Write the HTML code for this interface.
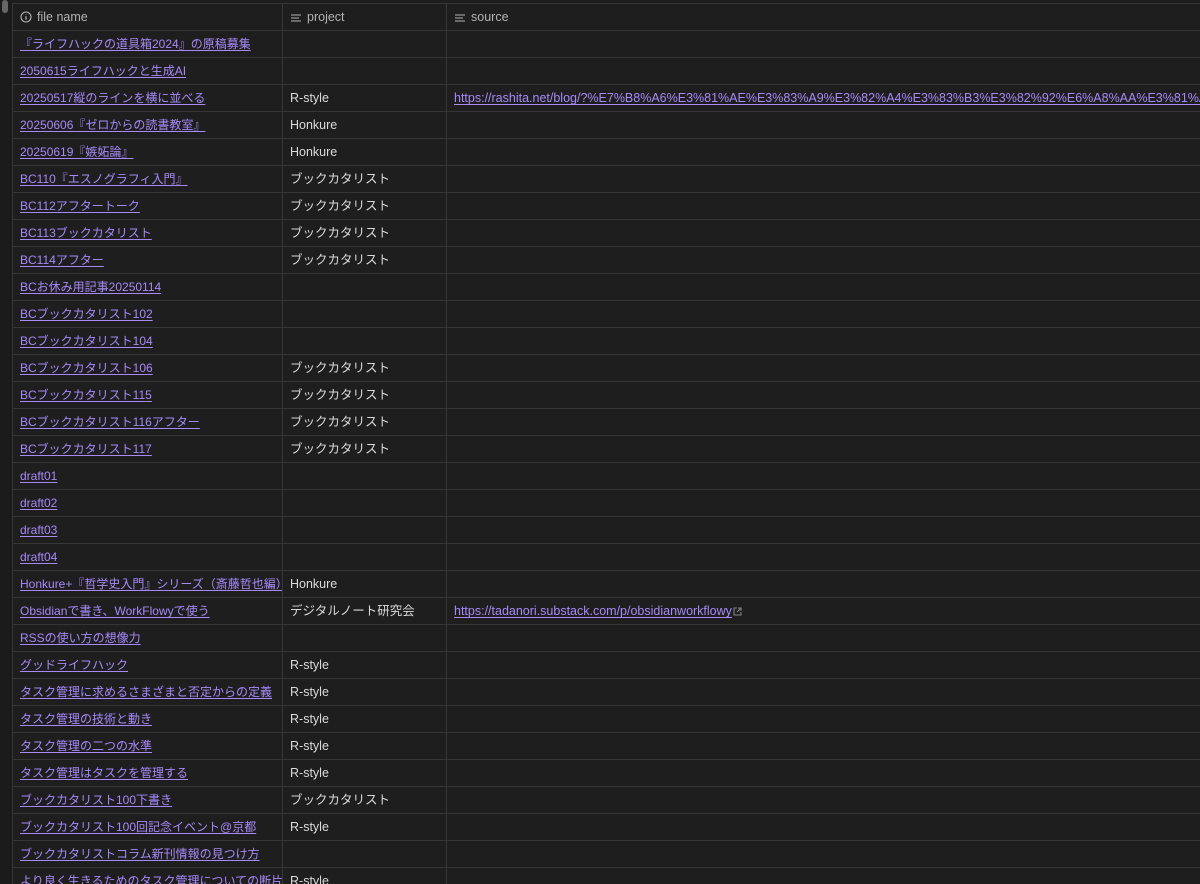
<!DOCTYPE html>
<html><head><meta charset="utf-8"><style>
html,body{margin:0;background:#1e1e1e;width:1200px;height:884px;overflow:hidden}
body{font-family:"Liberation Sans","Noto Sans CJK JP",sans-serif;font-size:12.5px;color:#dadada;position:relative}
.strip{position:absolute;left:0;top:0;width:12px;height:884px;background:#1b1b1b}
.thumb{position:absolute;left:2px;top:0;width:6px;height:13px;background:#666;border-radius:3px}
.wrap{position:absolute;left:12px;top:3px;width:1188px;height:881px;overflow:hidden}
table{border-collapse:collapse;table-layout:fixed;width:1300px}
td,th{border:1px solid #363636;height:26px;padding:0 0 0 7px;white-space:nowrap;overflow:hidden;text-align:left;font-weight:normal;line-height:16px;vertical-align:middle}
th{color:#b3b3b3}
td span,td a{display:inline-block;line-height:16px;vertical-align:middle}
td:first-child a{font-size:12px}
a{color:#a68af9;text-decoration:underline;text-underline-offset:2px}
.ic{display:inline-block;vertical-align:-2px;margin-right:5px}
</style></head><body>
<div class="strip"><div class="thumb"></div></div>
<div class="wrap">
<table>
<colgroup><col style="width:270px"><col style="width:164px"><col style="width:866px"></colgroup>
<tr><th><svg class="ic" width="12" height="12" viewBox="0 0 12 12"><circle cx="6" cy="6" r="5" fill="none" stroke="#b3b3b3" stroke-width="1.1"/><path d="M6 3.2v.5M6 5.2v3.6" stroke="#b3b3b3" stroke-width="1.2"/></svg>file name</th>
<th><svg class="ic" width="12" height="10" viewBox="0 0 12 10"><path d="M1 2h10M1 5h8M1 8h10" stroke="#b3b3b3" stroke-width="1.1"/></svg>project</th>
<th><svg class="ic" width="12" height="10" viewBox="0 0 12 10"><path d="M1 2h10M1 5h8M1 8h10" stroke="#b3b3b3" stroke-width="1.1"/></svg>source</th></tr>
<tr><td><a>『ライフハックの道具箱2024』の原稿募集</a></td><td></td><td></td></tr>
<tr><td><a>2050615ライフハックと生成AI</a></td><td></td><td></td></tr>
<tr><td><a>20250517縦のラインを横に並べる</a></td><td><span>R-style</span></td><td><a>https://rashita.net/blog/?%E7%B8%A6%E3%81%AE%E3%83%A9%E3%82%A4%E3%83%B3%E3%82%92%E6%A8%AA%E3%81%AB%E4%B8%A6</a></td></tr>
<tr><td><a>20250606『ゼロからの読書教室』</a></td><td><span>Honkure</span></td><td></td></tr>
<tr><td><a>20250619『嫉妬論』</a></td><td><span>Honkure</span></td><td></td></tr>
<tr><td><a>BC110『エスノグラフィ入門』</a></td><td><span>ブックカタリスト</span></td><td></td></tr>
<tr><td><a>BC112アフタートーク</a></td><td><span>ブックカタリスト</span></td><td></td></tr>
<tr><td><a>BC113ブックカタリスト</a></td><td><span>ブックカタリスト</span></td><td></td></tr>
<tr><td><a>BC114アフター</a></td><td><span>ブックカタリスト</span></td><td></td></tr>
<tr><td><a>BCお休み用記事20250114</a></td><td></td><td></td></tr>
<tr><td><a>BCブックカタリスト102</a></td><td></td><td></td></tr>
<tr><td><a>BCブックカタリスト104</a></td><td></td><td></td></tr>
<tr><td><a>BCブックカタリスト106</a></td><td><span>ブックカタリスト</span></td><td></td></tr>
<tr><td><a>BCブックカタリスト115</a></td><td><span>ブックカタリスト</span></td><td></td></tr>
<tr><td><a>BCブックカタリスト116アフター</a></td><td><span>ブックカタリスト</span></td><td></td></tr>
<tr><td><a>BCブックカタリスト117</a></td><td><span>ブックカタリスト</span></td><td></td></tr>
<tr><td><a>draft01</a></td><td></td><td></td></tr>
<tr><td><a>draft02</a></td><td></td><td></td></tr>
<tr><td><a>draft03</a></td><td></td><td></td></tr>
<tr><td><a>draft04</a></td><td></td><td></td></tr>
<tr><td><a>Honkure+『哲学史入門』シリーズ（斎藤哲也編）</a></td><td><span>Honkure</span></td><td></td></tr>
<tr><td><a>Obsidianで書き、WorkFlowyで使う</a></td><td><span>デジタルノート研究会</span></td><td><a>https://tadanori.substack.com/p/obsidianworkflowy</a><svg width="9" height="9" viewBox="0 0 9 9" style="margin-left:1px;vertical-align:middle"><path d="M4 1H1v7h7V5M5 1h3v3M8 1 4 5" fill="none" stroke="#888" stroke-width="1"/></svg></td></tr>
<tr><td><a>RSSの使い方の想像力</a></td><td></td><td></td></tr>
<tr><td><a>グッドライフハック</a></td><td><span>R-style</span></td><td></td></tr>
<tr><td><a>タスク管理に求めるさまざまと否定からの定義</a></td><td><span>R-style</span></td><td></td></tr>
<tr><td><a>タスク管理の技術と動き</a></td><td><span>R-style</span></td><td></td></tr>
<tr><td><a>タスク管理の二つの水準</a></td><td><span>R-style</span></td><td></td></tr>
<tr><td><a>タスク管理はタスクを管理する</a></td><td><span>R-style</span></td><td></td></tr>
<tr><td><a>ブックカタリスト100下書き</a></td><td><span>ブックカタリスト</span></td><td></td></tr>
<tr><td><a>ブックカタリスト100回記念イベント@京都</a></td><td><span>R-style</span></td><td></td></tr>
<tr><td><a>ブックカタリストコラム新刊情報の見つけ方</a></td><td></td><td></td></tr>
<tr><td><a>より良く生きるためのタスク管理についての断片</a></td><td><span>R-style</span></td><td></td></tr>
</table>
</div>
</body></html>
